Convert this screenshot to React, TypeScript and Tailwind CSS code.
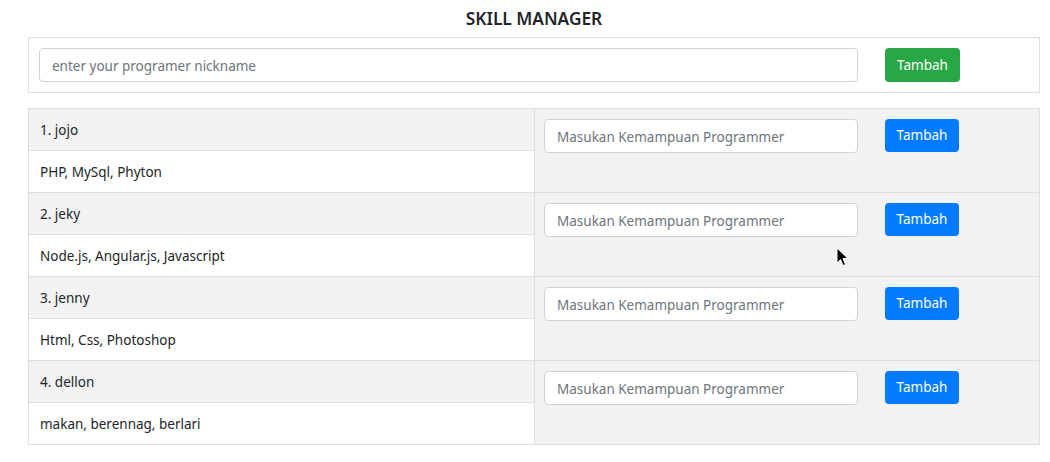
import React from "react";

const rows = [
  { name: "1. jojo", skills: "PHP, MySql, Phyton" },
  { name: "2. jeky", skills: "Node.js, Angular.js, Javascript" },
  { name: "3. jenny", skills: "Html, Css, Photoshop" },
  { name: "4. dellon", skills: "makan, berennag, berlari" },
];

export default function App() {
  return (
    <div
      className="relative w-[1050px] h-[462px] bg-white text-[#212529] text-[13.5px]"
      style={{ fontFamily: '"Noto Sans", "Open Sans", sans-serif' }}
    >
      <div className="pt-[6px] pl-[18px] h-[37px] text-center font-semibold text-[17.3px] leading-[26px] text-[#212529]">
        SKILL MANAGER
      </div>
      <div className="ml-[28px] w-[1012px]">
        <div className="h-[56px] border border-[#dfdfdf] flex items-center pl-[10px]">
          <input
            className="w-[819px] h-[34px] border border-[#ced4da] rounded-[4px] px-[12px] pt-[1px] text-[13.5px] placeholder:text-[#6c757d] outline-none"
            placeholder="enter your programer nickname"
          />
          <button className="ml-[27px] w-[75px] h-[34px] rounded-[4px] bg-[#28a745] text-white text-[13.5px]">
            Tambah
          </button>
        </div>
        <div className="mt-[15px] border-b border-l border-r border-[#dfdfdf]">
          {rows.map((r) => (
            <div key={r.name} className="flex">
              <div className="w-[506px] border-r border-[#dfdfdf]">
                <div className="h-[42px] border-t border-[#dfdfdf] bg-[#f2f2f2] flex items-center pl-[11px] pt-[1px]">
                  {r.name}
                </div>
                <div className="h-[42px] border-t border-[#dfdfdf] bg-white flex items-center pl-[11px] pt-[1px]">
                  {r.skills}
                </div>
              </div>
              <div className="flex-1 border-t border-[#dfdfdf] bg-[#f2f2f2] pt-[10px] pl-[9px] flex items-start">
                <input
                  className="w-[314px] h-[34px] bg-white border border-[#ced4da] rounded-[4px] px-[12px] pt-[1px] text-[13.5px] placeholder:text-[#6c757d] outline-none"
                  placeholder="Masukan Kemampuan Programmer"
                />
                <button className="ml-[27px] w-[74px] h-[33px] rounded-[4px] bg-[#007bff] text-white text-[13.5px]">
                  Tambah
                </button>
              </div>
            </div>
          ))}
        </div>
      </div>
      <svg
        className="absolute left-[836px] top-[247px]"
        width="16"
        height="22"
        viewBox="0 0 16 22"
      >
        <path
          d="M1 1 L1 16 L4.5 12.5 L7 18.5 L9.5 17.5 L7 11.5 L12 11.5 Z"
          fill="#000"
          stroke="#fff"
          strokeWidth="1"
          strokeLinejoin="round"
        />
      </svg>
    </div>
  );
}
